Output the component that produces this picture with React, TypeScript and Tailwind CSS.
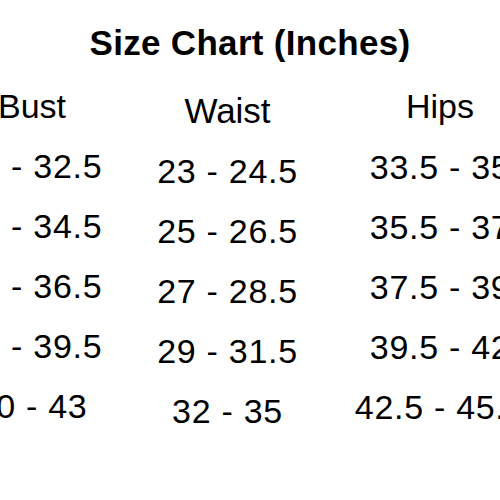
const bust = ["31 - 32.5", "33 - 34.5", "35 - 36.5", "37 - 39.5"];
const waist = ["23 - 24.5", "25 - 26.5", "27 - 28.5", "29 - 31.5"];
const hips = ["33.5 - 35.5", "35.5 - 37.5", "37.5 - 39.5", "39.5 - 42.5"];

const cell = "h-[60px] whitespace-nowrap text-[34px] leading-[60px] tracking-[0.7px]";

export default function App() {
  return (
    <div className="h-[500px] w-[500px] overflow-hidden bg-white text-black font-['Liberation_Sans',Arial,sans-serif]">
      <h1 className="pt-[23px] text-center text-[35px] font-bold leading-[40px] tracking-[0.3px]">
        Size Chart (Inches)
      </h1>

      <div className="ml-[-63px] mt-[23px] flex">
        {/* Bust */}
        <div className="flex w-[190px] shrink-0 flex-col items-center">
          <div className="h-[40px] text-[34px] leading-[40px]">Bust</div>
          <div className="mt-[10px] flex flex-col items-center">
            {bust.map((v) => (
              <div key={v} className={cell}>{v}</div>
            ))}
            <div className={cell}>40 - 43</div>
          </div>
        </div>

        {/* Waist */}
        <div className="flex w-[201px] shrink-0 flex-col items-center pt-[5px]">
          <div className="h-[40px] text-[35px] leading-[40px]">Waist</div>
          <div className="mt-[10px] flex flex-col items-center">
            {waist.map((v) => (
              <div key={v} className={cell}>{v}</div>
            ))}
            <div className={cell}>32 - 35</div>
          </div>
        </div>

        {/* Hips */}
        <div className="flex w-[224px] shrink-0 flex-col items-center">
          <div className="h-[40px] text-[34px] leading-[40px]">Hips</div>
          <div className="mt-[11px] flex flex-col items-center">
            <div className="flex flex-col items-center pl-[30px]">
              {hips.map((v) => (
                <div key={v} className={cell}>{v}</div>
              ))}
            </div>
            <div className={cell}>42.5 - 45.5</div>
          </div>
        </div>
      </div>
    </div>
  );
}
